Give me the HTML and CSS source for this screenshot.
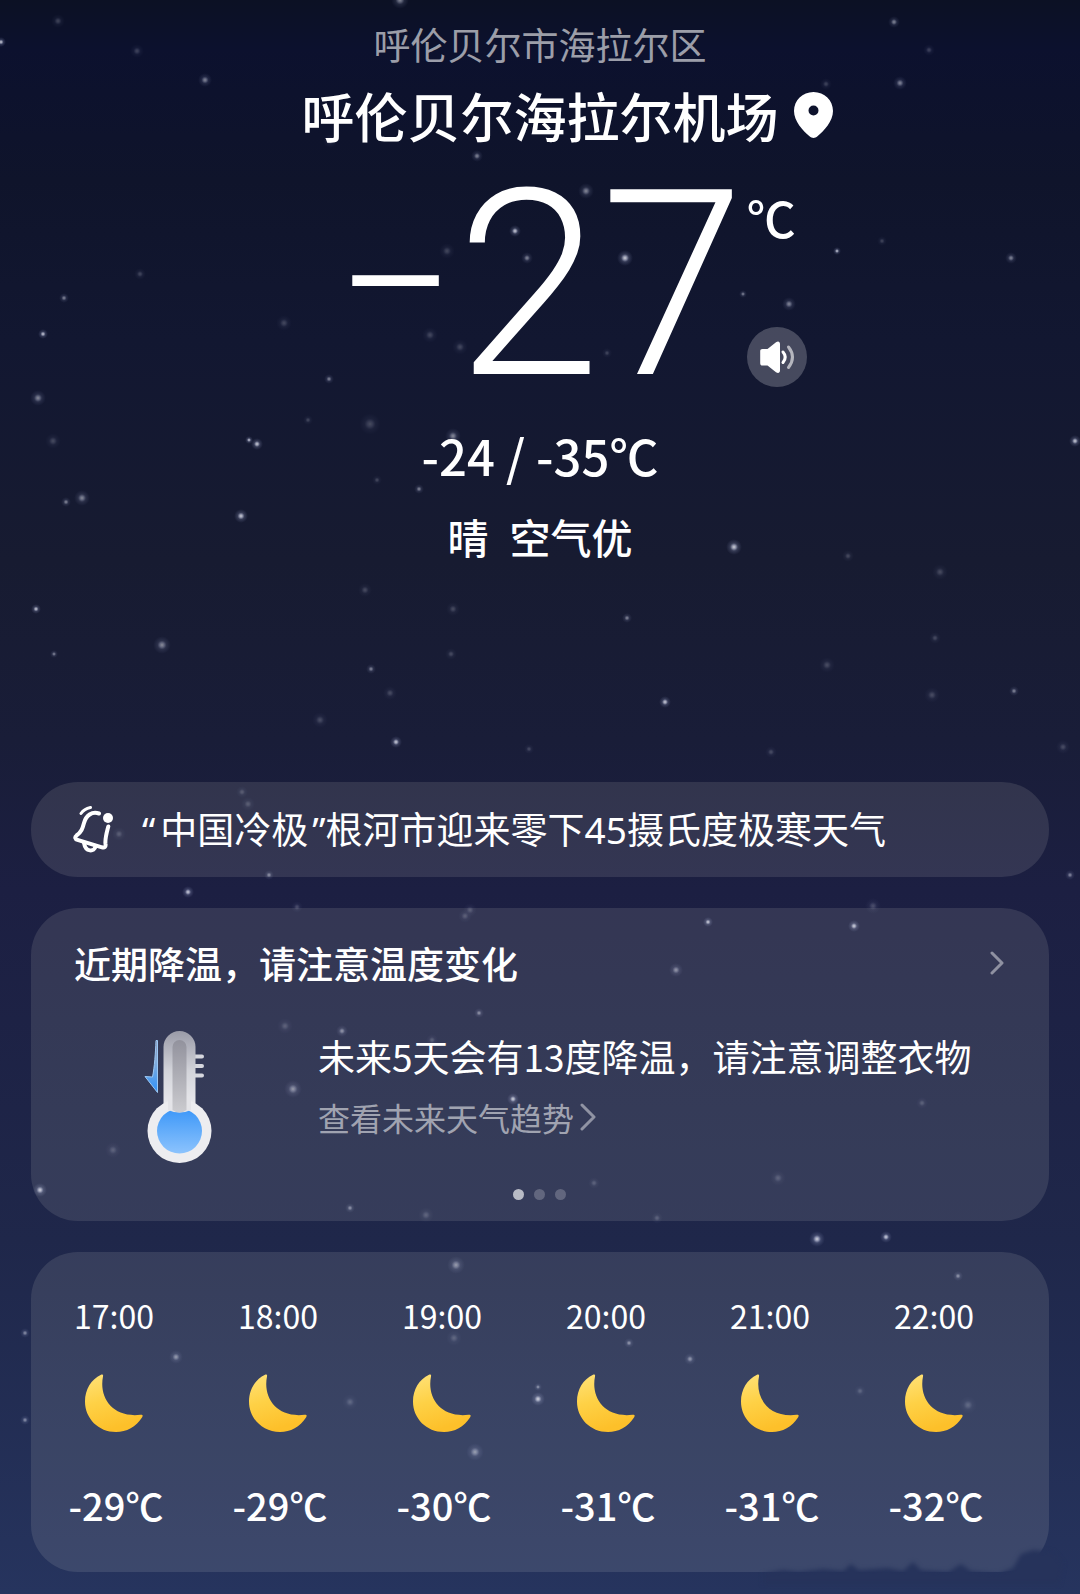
FILE: index.html
```html
<!DOCTYPE html>
<html lang="zh-CN">
<head>
    <meta charset="UTF-8">
    <meta name="viewport" content="width=device-width, initial-scale=1.0">
    <title>呼伦贝尔海拉尔机场 天气</title>
    <link rel="stylesheet" href="styles.css">
</head>
<body>
    <!-- 星空背景 -->
    <svg class="sky" viewBox="0 0 1080 1594" preserveAspectRatio="xMidYMin slice" aria-hidden="true">
        <defs>
            <radialGradient id="star">
                <stop offset="0" stop-color="#fff"/>
                <stop offset=".25" stop-color="#e4e8ff" stop-opacity=".7"/>
                <stop offset=".5" stop-color="#b4bce0" stop-opacity=".25"/>
                <stop offset="1" stop-color="#8d96c8" stop-opacity="0"/>
            </radialGradient>
        </defs>
        <g class="stars bright">
            <circle cx="1" cy="42" r="5"/><circle cx="43" cy="334" r="5"/><circle cx="257" cy="444" r="6"/>
            <circle cx="241" cy="516" r="7"/><circle cx="396" cy="742" r="6"/><circle cx="625" cy="258" r="8"/>
            <circle cx="515" cy="231" r="6"/><circle cx="734" cy="547" r="8"/><circle cx="665" cy="702" r="6"/>
            <circle cx="188" cy="892" r="6"/><circle cx="40" cy="1190" r="7"/><circle cx="817" cy="1239" r="8"/>
            <circle cx="886" cy="1237" r="6"/><circle cx="854" cy="926" r="6"/><circle cx="538" cy="1399" r="7"/>
            <circle cx="36" cy="609" r="5"/><circle cx="837" cy="251" r="4"/><circle cx="708" cy="922" r="5"/>
            <circle cx="1075" cy="441" r="6"/><circle cx="249" cy="440" r="4"/><circle cx="513" cy="1099" r="6"/>
        </g>
        <g class="stars">
            <circle cx="205" cy="80" r="7"/><circle cx="586" cy="191" r="8"/><circle cx="894" cy="22" r="6"/>
            <circle cx="900" cy="83" r="7"/><circle cx="1011" cy="258" r="6"/><circle cx="789" cy="304" r="7"/>
            <circle cx="38" cy="398" r="8"/><circle cx="453" cy="436" r="8"/><circle cx="82" cy="498" r="8"/>
            <circle cx="66" cy="502" r="5"/><circle cx="419" cy="489" r="5"/><circle cx="162" cy="645" r="9"/>
            <circle cx="54" cy="654" r="4"/><circle cx="371" cy="669" r="5"/><circle cx="627" cy="618" r="5"/>
            <circle cx="329" cy="379" r="5"/><circle cx="64" cy="298" r="5"/><circle cx="527" cy="258" r="6"/>
            <circle cx="743" cy="294" r="4"/><circle cx="1014" cy="691" r="5"/><circle cx="269" cy="875" r="5"/>
            <circle cx="676" cy="970" r="7"/><circle cx="1070" cy="875" r="5"/><circle cx="342" cy="1031" r="6"/>
            <circle cx="293" cy="1089" r="9"/><circle cx="479" cy="1013" r="5"/><circle cx="456" cy="1265" r="9"/>
            <circle cx="176" cy="1357" r="7"/><circle cx="690" cy="1359" r="6"/><circle cx="475" cy="1452" r="9"/>
            <circle cx="538" cy="1387" r="4"/><circle cx="25" cy="1333" r="5"/><circle cx="25" cy="1420" r="5"/>
            <circle cx="958" cy="1276" r="5"/><circle cx="350" cy="1208" r="5"/><circle cx="400" cy="0" r="9"/>
            <circle cx="629" cy="1343" r="5"/><circle cx="477" cy="156" r="6"/>
        </g>
        <g class="stars faint">
            <circle cx="58" cy="21" r="7"/><circle cx="137" cy="51" r="7"/><circle cx="447" cy="251" r="8"/>
            <circle cx="140" cy="274" r="6"/><circle cx="284" cy="323" r="8"/><circle cx="430" cy="335" r="8"/>
            <circle cx="460" cy="347" r="8"/><circle cx="53" cy="441" r="8"/><circle cx="370" cy="424" r="11"/>
            <circle cx="308" cy="420" r="5"/><circle cx="377" cy="480" r="5"/><circle cx="365" cy="590" r="7"/>
            <circle cx="453" cy="609" r="7"/><circle cx="451" cy="654" r="6"/><circle cx="390" cy="693" r="7"/>
            <circle cx="320" cy="720" r="8"/><circle cx="529" cy="749" r="5"/><circle cx="330" cy="141" r="7"/>
            <circle cx="929" cy="50" r="6"/><circle cx="826" cy="84" r="6"/><circle cx="882" cy="241" r="5"/>
            <circle cx="607" cy="353" r="5"/><circle cx="848" cy="556" r="6"/><circle cx="940" cy="572" r="8"/>
            <circle cx="827" cy="665" r="8"/><circle cx="935" cy="638" r="6"/><circle cx="932" cy="695" r="8"/>
            <circle cx="771" cy="752" r="6"/><circle cx="1063" cy="747" r="7"/><circle cx="242" cy="792" r="6"/>
            <circle cx="248" cy="804" r="7"/><circle cx="119" cy="834" r="7"/><circle cx="297" cy="907" r="6"/>
            <circle cx="470" cy="910" r="7"/><circle cx="465" cy="916" r="7"/><circle cx="873" cy="906" r="8"/>
            <circle cx="285" cy="1026" r="8"/><circle cx="113" cy="1150" r="8"/><circle cx="426" cy="1215" r="8"/>
            <circle cx="657" cy="1218" r="6"/><circle cx="778" cy="1178" r="8"/><circle cx="922" cy="1103" r="6"/>
            <circle cx="594" cy="1183" r="6"/><circle cx="350" cy="1402" r="8"/><circle cx="860" cy="1391" r="6"/>
            <circle cx="968" cy="1405" r="9"/><circle cx="454" cy="1338" r="8"/><circle cx="432" cy="1040" r="6"/>
        </g>
    </svg>

    <!-- 图标定义 -->
    <svg class="defs" aria-hidden="true">
        <defs>
            <linearGradient id="moonFill" x1="0" y1="0" x2=".3" y2="1">
                <stop offset="0" stop-color="#ffe27a"/>
                <stop offset=".5" stop-color="#fed146"/>
                <stop offset="1" stop-color="#fdc02a"/>
            </linearGradient>
        </defs>
        <symbol id="moon" viewBox="0 0 58 58">
            <path d="M16 .8C17.200 0 18.500 .6 18 2.500C13.800 23.500 27 44 55.500 40.800C57.800 40.600 58.200 41.600 57 43.500C51 53 41.500 58 31 58C13.500 58 0 44.500 0 27.500C0 15.500 6.200 5.500 16 .8Z" fill="url(#moonFill)"/>
        </symbol>
    </svg>

    <main class="page">
        <header class="now">
            <p class="district">呼伦贝尔市海拉尔区</p>
            <div class="centered title-row">
                <h1 class="title">呼伦贝尔海拉尔机场</h1>
                <svg class="pin" viewBox="0 0 39 46" aria-hidden="true">
                    <path fill="#fff" fill-rule="evenodd" d="M19.500 0C8.500 0 0 8.500 0 19C0 29.500 9 38.500 15.500 44.300C18 46.500 21 46.500 23.500 44.300C30 38.500 39 29.500 39 19C39 8.500 30.500 0 19.500 0ZM19.500 13.500A5 5 0 1 1 19.500 23.500A5 5 0 1 1 19.500 13.500Z"/>
                </svg>
            </div>
            <div class="centered temp-row">
                <div class="temp"><span class="sign">−</span><span>27</span></div>
                <div class="temp-side">
                    <span class="unit">℃</span>
                    <button class="speak" type="button" aria-label="播报">
                        <svg viewBox="0 0 60 60" aria-hidden="true">
                            <path fill="#fff" d="M15.500 22H20.500L29 15.300C31 13.800 33 14.500 33 17V43.500C33 46 31 46.700 29 45.200L20.500 38.500H15.500C14 38.500 13.200 37.700 13.200 36.200V24.300C13.200 22.800 14 22 15.500 22Z"/>
                            <path class="wave" d="M36 25Q40.500 30.200 36 35.500"/>
                            <path class="wave outer" d="M41.500 20Q49.500 30.200 41.500 40.500"/>
                        </svg>
                    </button>
                </div>
            </div>
            <p class="range">-24 / -35℃</p>
            <p class="condition"><span>晴</span><span>空气优</span></p>
        </header>

        <a class="card news" href="#">
            <svg class="bell" viewBox="0 0 40 48" aria-hidden="true">
                <g fill="none" stroke="#fff" stroke-width="4" stroke-linecap="round" stroke-linejoin="round">
                    <path d="M26 7.500C19 5 13 9.500 11 17C9.500 22.500 8.500 26 3.500 29.500C1.500 31 2 33 4.500 33.800L29 41.300C31.500 42 33 41 32.500 38C31.800 33 33.500 27.500 35.300 20.500"/>
                    <path d="M11 37C12.500 46.500 21.500 46 22.500 40.500"/>
                    <path stroke-width="3" d="M8 7.500Q11 3 17.500 1.500"/>
                </g>
                <circle cx="35" cy="12" r="5" fill="#fff"/>
            </svg>
            <span class="news-text"><span class="quote-open">“</span>中国冷极<span class="quote-close">”</span>根河市迎来零下45摄氏度极寒天气</span>
        </a>

        <section class="card tip">
            <div class="tip-head">
                <h2 class="tip-title">近期降温，请注意温度变化</h2>
                <a class="tip-more" href="#" aria-label="更多">
                    <svg class="chevron" viewBox="0 0 14 24" aria-hidden="true"><path d="M2 2L12 12L2 22"/></svg>
                </a>
            </div>
            <div class="tip-body">
                <svg class="thermo" viewBox="0 0 70 133" aria-hidden="true">
                    <defs>
                        <linearGradient id="tube" x1="0" y1="0" x2="0" y2="1">
                            <stop offset="0" stop-color="#9a9ba8"/>
                            <stop offset=".5" stop-color="#d3d4da"/>
                            <stop offset="1" stop-color="#ededf0"/>
                        </linearGradient>
                        <linearGradient id="core" x1="0" y1="0" x2="0" y2="1">
                            <stop offset="0" stop-color="#92929d"/>
                            <stop offset="1" stop-color="#cbcbcf"/>
                        </linearGradient>
                        <linearGradient id="bulb" x1="0" y1="0" x2="0" y2="1">
                            <stop offset="0" stop-color="#3c97f8"/>
                            <stop offset="1" stop-color="#8cc3fd"/>
                        </linearGradient>
                        <linearGradient id="drop" x1="0" y1="0" x2="0" y2="1">
                            <stop offset="0" stop-color="#8a8fae"/>
                            <stop offset=".4" stop-color="#84addb"/>
                            <stop offset="1" stop-color="#2f92fb"/>
                        </linearGradient>
                    </defs>
                    <path d="M12 9.500H13.500V61.500L1 45.500L8.500 46C10.500 36 11.500 22 12 9.500Z" fill="url(#drop)" stroke="#9cc8f4"/>
                    <path d="M51 25.500H58M51 35H58M51 44.500H58" stroke="#d6d7de" stroke-width="4" stroke-linecap="round"/>
                    <path d="M19.500 16A16 16 0 0 1 51.500 16V80H19.500Z" fill="url(#tube)"/>
                    <circle cx="35.500" cy="100" r="32" fill="#ededf0"/>
                    <circle cx="35.500" cy="100" r="22.500" fill="url(#bulb)"/>
                    <path d="M24 79V66H47V79Q35.500 84 24 79Z" fill="#e4e4e8"/>
                    <path d="M28.500 16A7 7 0 0 1 42.500 16V79Q35.500 84 28.500 79Z" fill="url(#core)"/>
                </svg>
                <div class="tip-info">
                    <p class="tip-text">未来5天会有13度降温，请注意调整衣物</p>
                    <a class="tip-link" href="#">查看未来天气趋势<svg class="chevron big" viewBox="0 0 17 28" aria-hidden="true"><path d="M2 2L14 14L2 26"/></svg></a>
                </div>
            </div>
            <div class="dots"><i class="dot active"></i><i class="dot"></i><i class="dot"></i></div>
        </section>

        <section class="card hourly">
            <div class="hour"><span class="time">17:00</span><svg class="moon"><use href="#moon"/></svg><span class="deg">-29℃</span></div>
            <div class="hour"><span class="time">18:00</span><svg class="moon"><use href="#moon"/></svg><span class="deg">-29℃</span></div>
            <div class="hour"><span class="time">19:00</span><svg class="moon"><use href="#moon"/></svg><span class="deg">-30℃</span></div>
            <div class="hour"><span class="time">20:00</span><svg class="moon"><use href="#moon"/></svg><span class="deg">-31℃</span></div>
            <div class="hour"><span class="time">21:00</span><svg class="moon"><use href="#moon"/></svg><span class="deg">-31℃</span></div>
            <div class="hour"><span class="time">22:00</span><svg class="moon"><use href="#moon"/></svg><span class="deg">-32℃</span></div>
            <!-- 右下角的暗影 -->
            <svg class="shade" viewBox="0 0 310 50" aria-hidden="true">
                <path d="M0 40L20 36L35 38L60 35L80 37L88 30L96 36L125 34L140 37L150 28L158 36L185 38L198 30L208 37L235 40L250 34L258 20L270 16L290 18L300 30L296 50H0Z"/>
            </svg>
        </section>
    </main>
</body>
</html>
```
FILE: styles.css
```css
* {
    box-sizing: border-box;
}

body {
    margin: 0;
    min-height: 100vh;
    position: relative;
    font-family: 'Noto Sans CJK SC', sans-serif;
    color: #fff;
    background: linear-gradient(180deg, #0c1124 0, #0c112e 50px, #0f142b 180px, #121731 340px, #171b31 560px, #191d38 740px, #1c1f42 890px, #1f274a 1240px, #26345e 100%);
}

h1,
h2,
p {
    margin: 0;
    font-weight: 500;
}

a {
    color: inherit;
    text-decoration: none;
}

/* 星空 */
.sky {
    position: absolute;
    inset: 0;
    width: 100%;
    height: 100%;
}

.stars {
    fill: url(#star);
    opacity: .5;
}

.stars.bright {
    opacity: .8;
}

.stars.faint {
    opacity: .22;
}

.defs {
    position: absolute;
    width: 0;
    height: 0;
}

.page {
    position: relative;
    display: flex;
    flex-direction: column;
    gap: 31px;
    padding: 22px 31px 21px;
}

/* 当前天气 */
.now {
    text-align: center;
    margin-bottom: 190px;
}

.district {
    font-size: 37px;
    font-weight: 400;
    line-height: 44px;
    color: rgba(255, 255, 255, .6);
}

.centered {
    display: grid;
    grid-template-columns: 1fr auto 1fr;
}

.title-row {
    margin-top: 15px;
    column-gap: 15px;
    align-items: center;
}

.title {
    grid-column: 2;
    font-size: 53px;
    line-height: 68px;
}

.pin {
    width: 39px;
    height: 46px;
}

.temp-row {
    margin-top: 13px;
    column-gap: 2px;
}

.temp {
    grid-column: 2;
    display: flex;
    align-items: center;
    padding-top: 20px;
    font-family: Roboto, sans-serif;
    font-size: 260px;
    font-weight: 350;
    line-height: 200px;
}

.sign {
    font-size: 212px;
}

.temp-side {
    display: flex;
    flex-direction: column;
    align-items: flex-start;
    gap: 78px;
    padding-top: 23px;
}

.unit {
    font-size: 49px;
    font-weight: 500;
    line-height: 64px;
}

.speak {
    width: 60px;
    height: 60px;
    padding: 0;
    border: none;
    border-radius: 50%;
    background: rgba(255, 255, 255, .22);
    cursor: pointer;
}

.speak svg {
    display: block;
}

.wave {
    fill: none;
    stroke: #fff;
    stroke-width: 3;
    stroke-linecap: round;
}

.wave.outer {
    stroke: rgba(255, 255, 255, .6);
}

.range {
    margin-top: 38px;
    font-size: 49px;
    line-height: 60px;
}

.condition {
    display: flex;
    justify-content: center;
    gap: 21px;
    margin-top: 26px;
    font-size: 41px;
    line-height: 50px;
}

/* 卡片 */
.card {
    border-radius: 47px;
    background: rgba(255, 255, 240, .105);
}

.news {
    display: flex;
    align-items: center;
    gap: 26px;
    padding: 23px 42px;
}

.bell {
    width: 40px;
    height: 48px;
    flex: none;
}

.news-text {
    font-family: 'Noto Sans', 'Noto Sans CJK SC', sans-serif;
    font-size: 37px;
    line-height: 49px;
}

.quote-open {
    margin: 0 5px 0 3px;
}

.quote-close {
    margin-left: 4px;
}

.tip {
    padding: 31px 45px 21px 43px;
}

.tip-head {
    display: flex;
    justify-content: space-between;
    align-items: center;
}

.tip-title {
    font-size: 37px;
    line-height: 48px;
}

.chevron {
    display: block;
    width: 14px;
    height: 24px;
    fill: none;
    stroke: rgba(255, 255, 255, .45);
    stroke-width: 3;
    stroke-linecap: round;
    stroke-linejoin: round;
}

.chevron.big {
    width: 17px;
    height: 28px;
}

.tip-body {
    display: flex;
    gap: 104px;
    padding-left: 70px;
    margin-top: 44px;
}

.thermo {
    width: 70px;
    height: 133px;
    flex: none;
}

.tip-text {
    font-size: 37px;
    font-weight: 400;
    line-height: 50px;
}

.tip-link {
    display: flex;
    align-items: center;
    gap: 6px;
    margin-top: 16px;
    font-size: 32px;
    line-height: 40px;
    color: rgba(255, 255, 255, .55);
}

.dots {
    display: flex;
    justify-content: center;
    gap: 10px;
    margin-top: 25px;
}

.dot {
    width: 11px;
    height: 11px;
    border-radius: 50%;
    background: rgba(255, 255, 255, .22);
}

.dot.active {
    background: rgba(255, 255, 255, .65);
}

/* 逐小时预报 */
.hourly {
    position: relative;
    display: grid;
    grid-template-columns: repeat(6, 1fr);
    padding: 41px 33px 43px 1px;
}

.hour {
    display: flex;
    flex-direction: column;
    align-items: center;
}

.time {
    font-size: 32px;
    line-height: 44px;
}

.moon {
    width: 58px;
    height: 58px;
    margin: 37px 0 49px;
}

.deg {
    padding-left: 4px;
    font-size: 38px;
    font-weight: 500;
    line-height: 48px;
}

.shade {
    position: absolute;
    right: -24px;
    bottom: -12px;
    width: 310px;
    height: 50px;
    fill: #26335b;
    filter: blur(2px);
}
```
